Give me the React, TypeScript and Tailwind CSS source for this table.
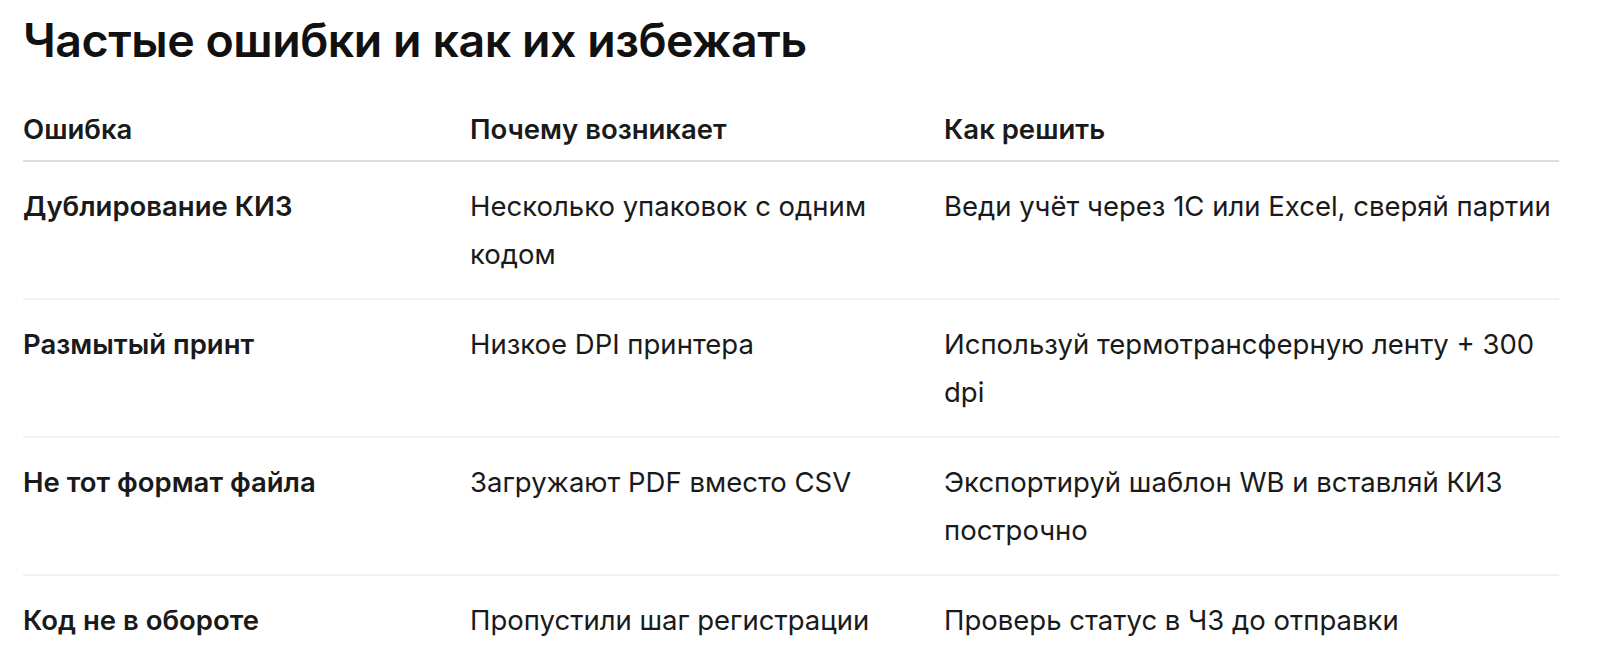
import React from "react";

type Row = {
  error: string;
  reason: string;
  fix: string;
};

const rows: Row[] = [
  {
    error: "Дублирование КИЗ",
    reason: "Несколько упаковок с одним кодом",
    fix: "Веди учёт через 1С или Excel, сверяй партии",
  },
  {
    error: "Размытый принт",
    reason: "Низкое DPI принтера",
    fix: "Используй термотрансферную ленту + 300 dpi",
  },
  {
    error: "Не тот формат файла",
    reason: "Загружают PDF вместо CSV",
    fix: "Экспортируй шаблон WB и вставляй КИЗ построчно",
  },
  {
    error: "Код не в обороте",
    reason: "Пропустили шаг регистрации",
    fix: "Проверь статус в ЧЗ до отправки",
  },
];

const headers = ["Ошибка", "Почему возникает", "Как решить"];

export default function App() {
  return (
    <div
      className="min-h-screen bg-white px-[23px] pt-[12px] text-[#1a1a1a]"
      style={{ fontFamily: "Inter, 'Noto Sans', sans-serif" }}
    >
      <h2 className="text-[46.5px] leading-[56px] font-semibold tracking-[-0.01em] text-[#111]">
        Частые ошибки и как их избежать
      </h2>

      <div className="mt-[37px] w-[1536px]">
        <div className="grid grid-cols-[447px_474px_615px] border-b-2 border-[#dcdcdc] pb-[7px]">
          {headers.map((h) => (
            <div key={h} className="text-[27.5px] leading-[48px] font-semibold">
              {h}
            </div>
          ))}
        </div>

        {rows.map((row, index) => (
          <div
            key={index}
            className="grid grid-cols-[447px_474px_615px] border-b-2 border-[#f1f1f1] py-5 text-[27.5px] leading-[48px]"
          >
            <div className="pr-6 font-semibold">{row.error}</div>
            <div className="pr-6">{row.reason}</div>
            <div>{row.fix}</div>
          </div>
        ))}
      </div>
    </div>
  );
}
